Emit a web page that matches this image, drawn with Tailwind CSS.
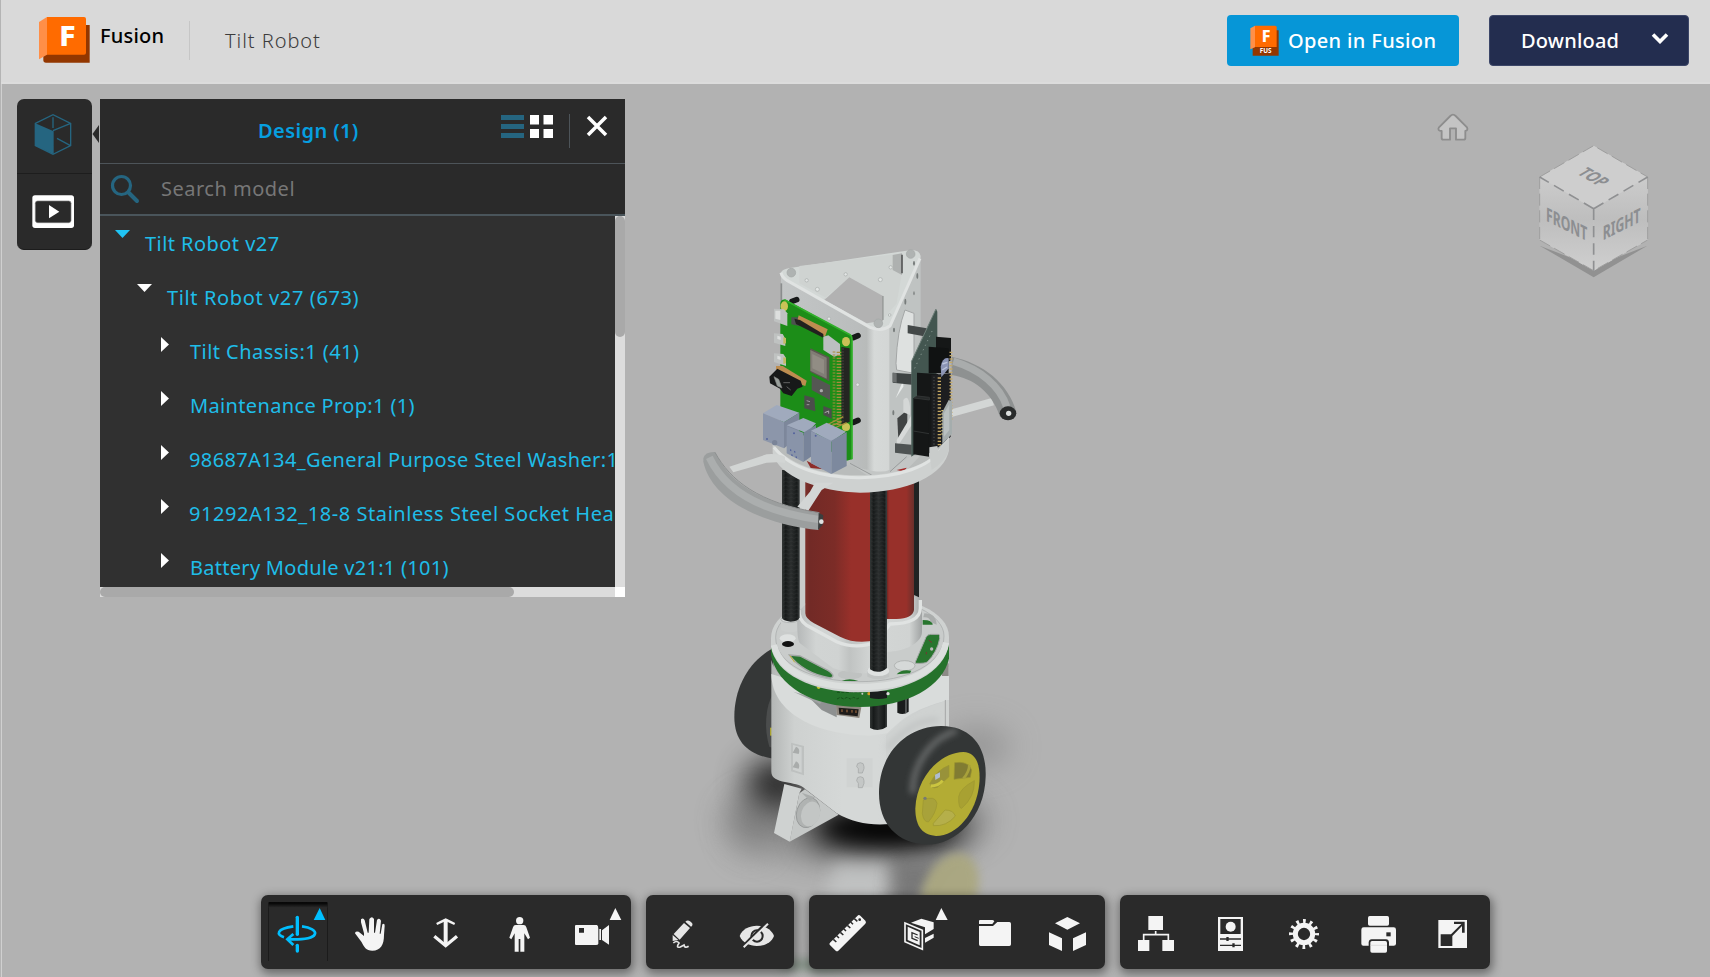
<!DOCTYPE html>
<html lang="en">
<head>
<meta charset="utf-8">
<title>Fusion - Tilt Robot</title>
<script src="https://cdn.jsdelivr.net/npm/@tailwindcss/browser@4"></script>
</head>
<body class="h-screen overflow-hidden bg-[#b2b2b2] font-['Noto_Sans','Open_Sans',sans-serif] text-[20px]">
<div class="flex h-screen flex-col border-l border-[#b4b4b4]">
  <header class="flex h-[84px] shrink-0 items-start border-b-2 border-[#dcdcdc] bg-[#d9d9d9] pl-[38px] pr-[21px]">
    <svg class="mt-[17px] h-[46px] w-[51px] overflow-visible" viewBox="117 51 153 138">
      <path d="M140 75H269V188H138Q130 188 130 180V165Z" fill="#933700"/>
      <path d="M117 66L141 51V164L117 178Z" fill="#ff8f48"/>
      <path d="M141 51H252Q258 51 258 57V158Q258 164 252 164H141Z" fill="#ff6b00"/>
      <text x="202" y="138" text-anchor="middle" font-family="Noto Sans" font-weight="800" font-size="86" textLength="50" lengthAdjust="spacingAndGlyphs" fill="#fff">F</text>
    </svg>
    <div class="ml-[10px] mt-[18px] w-[64px] whitespace-nowrap font-medium leading-9 tracking-[0.2px] text-black">Fusion</div>
    <div class="ml-[25px] mt-[21px] h-[39px] w-px bg-[#c6c6c6]"></div>
    <h1 class="ml-[35px] mt-[23px] font-light leading-9 tracking-[0.95px] text-[#3c3c3c]">Tilt Robot</h1>
    <div class="ml-auto mt-[15px] flex gap-[30px]">
      <button class="flex h-[51px] w-[232px] items-center rounded-[4px] bg-[#0696d7] pl-[23px] font-medium text-white">
        <svg class="h-[31px] w-[30px]" viewBox="152 76 90 93">
          <path d="M168 92H238V168H160V145Z" fill="#933700"/>
          <path d="M153 86L167 78V143L153 149Z" fill="#ff8f48"/>
          <path d="M167 78H227Q232 78 232 83V142H167Z" fill="#ff6b00"/>
          <text x="200" y="127" text-anchor="middle" font-family="Noto Sans" font-weight="800" font-size="48" fill="#fff">F</text>
          <text x="199" y="161" text-anchor="middle" font-family="Noto Sans" font-weight="700" font-size="19" textLength="35" fill="#fff">FUS</text>
        </svg>
        <span class="ml-[8px] whitespace-nowrap tracking-[0.35px]">Open in Fusion</span>
      </button>
      <button class="flex h-[51px] w-[200px] items-center rounded-[4px] border border-[#3c4668] bg-[#232d4f] pl-[31px] font-medium text-white">
        <span class="w-[97px] whitespace-nowrap tracking-[0.2px]">Download</span>
        <svg class="-mt-[6px] ml-[33px] h-[12px] w-[18px]" viewBox="0 0 18 12"><path d="M2 2.500L9 9.500L16 2.500" fill="none" stroke="#fff" stroke-width="3.600"/></svg>
      </button>
    </div>
  </header>

  <main class="relative isolate flex flex-1 flex-col justify-between border-l border-[#d0d0d0]">
    <svg class="absolute -left-px top-0 -z-10 h-[893px] w-[1709px]" viewBox="1 84 1709 893">
      <defs>
        <filter id="b8" x="-100%" y="-150%" width="300%" height="400%"><feGaussianBlur stdDeviation="48"/></filter>
        <filter id="b6" x="-100%" y="-100%" width="300%" height="300%"><feGaussianBlur stdDeviation="26"/></filter>
        <filter id="b4" x="-50%" y="-50%" width="200%" height="200%"><feGaussianBlur stdDeviation="14"/></filter>
        <filter id="b2" x="-50%" y="-50%" width="200%" height="200%"><feGaussianBlur stdDeviation="9"/></filter>
        <linearGradient id="red"><stop offset="0" stop-color="#7d302a"/><stop offset=".04" stop-color="#722a26"/><stop offset=".27" stop-color="#7c2c27"/><stop offset=".42" stop-color="#98302a"/><stop offset=".93" stop-color="#98302a"/><stop offset="1" stop-color="#69302c"/></linearGradient>
        <linearGradient id="rod"><stop offset="0" stop-color="#343837"/><stop offset=".2" stop-color="#171a1a"/><stop offset=".5" stop-color="#2b2e2e"/><stop offset=".85" stop-color="#171a1a"/><stop offset="1" stop-color="#3c4040"/></linearGradient>
        <linearGradient id="body"><stop offset="0" stop-color="#b3b6b5"/><stop offset=".13" stop-color="#ced1d0"/><stop offset=".4" stop-color="#d5d8d7"/><stop offset=".6" stop-color="#d5d8d7"/><stop offset="1" stop-color="#c7caca"/></linearGradient>
        <linearGradient id="cup"><stop offset="0" stop-color="#b5b8b8"/><stop offset=".15" stop-color="#d1d4d3"/><stop offset=".33" stop-color="#d0d3d2"/><stop offset=".42" stop-color="#c0c3c2"/><stop offset=".6" stop-color="#d3d6d5"/><stop offset=".9" stop-color="#d0d3d2"/><stop offset="1" stop-color="#a0a3a3"/></linearGradient>
        <linearGradient id="face"><stop offset="0" stop-color="#c3c6c6"/><stop offset=".7" stop-color="#babdbd"/><stop offset=".79" stop-color="#b8bbba"/><stop offset=".86" stop-color="#d6d9d8"/><stop offset="1" stop-color="#d3d6d5"/></linearGradient>
        <linearGradient id="cubeShade" x1="0" y1="0" x2="0" y2="1"><stop offset="0" stop-color="#cccccc"/><stop offset=".45" stop-color="#bebebe"/><stop offset="1" stop-color="#cfcfcf"/></linearGradient>
        <pattern id="weave" width="16" height="12" patternUnits="userSpaceOnUse"><path d="M0 3L8 7L16 3" fill="none" stroke="#4a5050" stroke-width="1.500" opacity=".35"/></pattern>
        <pattern id="pins" width="60" height="9" patternUnits="userSpaceOnUse"><path d="M0 3H16M20 4H34" stroke="#a98c3c" stroke-width="3.500"/></pattern>
        <clipPath id="tireClip"><path d="M567 880C567 760 650 678 755 678C850 680 890 745 887 830C884 950 800 1034 710 1034C620 1030 567 970 567 880Z"/></clipPath>
      </defs>

      <!-- ground shadow and reflection -->
      <g transform="translate(690 500) scale(.33333)">
        <ellipse cx="500" cy="960" rx="400" ry="130" fill="#555" opacity=".4" filter="url(#b8)"/>
        <ellipse cx="260" cy="850" rx="95" ry="75" fill="#000" opacity=".8" filter="url(#b8)"/>
        <ellipse cx="590" cy="985" rx="240" ry="66" fill="#000" filter="url(#b8)"/>
        <ellipse cx="590" cy="985" rx="180" ry="32" fill="#050505" opacity=".75" filter="url(#b6)"/>
        <ellipse cx="860" cy="740" rx="100" ry="60" fill="#777" opacity=".5" filter="url(#b8)"/>
        <path d="M430 1090H600L560 1330H380Z" fill="#c4c6c6" opacity=".8" filter="url(#b6)"/>
        <path d="M610 1090H770L650 1300H590Z" fill="#5b5c5c" opacity=".65" filter="url(#b6)"/>
        <ellipse cx="780" cy="1175" rx="80" ry="120" transform="rotate(22 780 1175)" fill="#aaa780" opacity=".95" filter="url(#b4)"/>
        <ellipse cx="180" cy="980" rx="60" ry="90" fill="#666" opacity=".35" filter="url(#b8)"/>
        <ellipse cx="380" cy="1395" rx="120" ry="18" fill="#5d7a62" opacity=".5" filter="url(#b4)"/>
      </g>

      <!-- lower chassis -->
      <g transform="translate(690 500) scale(.33333)">
        <path d="M250 445C180 480 133 560 133 650C133 730 180 765 250 776Z" fill="#353737"/>
        <path d="M250 580C225 620 222 690 238 740L250 745Z" fill="#4b4d4d"/><path d="M240 683h7v24h-7z" fill="#a8a22f"/>
        <path d="M244 480C280 640 740 640 777 480V690L770 800L600 972C540 977 490 968 440 940L345 866C320 840 244 855 244 815Z" fill="url(#body)"/>
        <path d="M244 522C246 640 380 705 540 707L592 700C650 640 700 620 777 600V500L500 600Z" fill="#d9dcdb"/>
        <path d="M588 706V830L777 690V600C700 620 650 650 588 706Z" fill="#cfd2d1"/>
        <path d="M592 745C640 690 690 655 745 660" fill="none" stroke="#b9bcbc" stroke-width="10" filter="url(#b2)"/>
        <path d="M766 600V685" stroke="#a5a8a8" stroke-width="3"/>
        <path d="M303 728L342 738V826L303 814Z" fill="#bec1c0"/><path d="M309 735L335 742V818L309 809Z" fill="#ced1d0"/>
        <path d="M318 740q14 6 8 22l-18-4zM318 784q14 6 8 22l-18-4z" fill="#a9acab"/>
        <path d="M470 775H548V862H470Z" fill="#d0d3d2"/>
        <g fill="#c4c7c6" stroke="#a0a3a3" stroke-width="2"><path d="M500 800a11 12 0 0 1 22 0v6l-5 13h-12v-13zM500 842a11 12 0 0 1 22 0v8l-5 13h-12v-13z"/></g>
        <path d="M340 575L440 595V652L395 630Z" fill="#8e9191"/><path d="M310 575L390 612L400 600L430 610" fill="#9fa2a2"/>
        <path d="M438 612L514 622L508 654L440 645Z" fill="#8d867d"/><path d="M446 623L506 628L503 649L448 643Z" fill="#1f1c1a"/><path d="M456 628v8M471 629v8M486 630v8M498 631v8" stroke="#b07344" stroke-width="3"/>
        <path d="M622 590L656 580V635Q640 648 622 638Z" fill="#1a1c1c"/><path d="M648 590V640" stroke="#8a8d8d" stroke-width="3"/>
        <path d="M756 490h20v38h-20z" fill="#8c8a86"/>
        <path d="M540 560H591V680Q566 698 540 684Z" fill="url(#rod)"/>
        <!-- foot -->
        <path d="M299 1025L328 880L345 868L446 944Z" fill="#c5c8c7"/>
        <path d="M283 852L335 866L328 880L299 1025L252 999Z" fill="#cfd2d1"/>
        <ellipse cx="354" cy="938" rx="34" ry="46" transform="rotate(18 354 938)" fill="#b0b3b2" stroke="#8c8f8f" stroke-width="2"/>
        <ellipse cx="362" cy="942" rx="28" ry="38" transform="rotate(18 362 942)" fill="#c3c6c5"/>
        <path d="M335 878l40 14-16 10z" fill="#aaadac"/>
        <!-- green ring board -->
        <path d="M243 415V465C262 560 370 621 510 621C650 621 760 560 777 475V410Z" fill="#25722b"/>
        <path d="M441 577H514M441 597l10-5 10 5 10-5 10 5 10-5 10 5 10-5" stroke="#17511b" stroke-width="3" stroke-dasharray="9 4" fill="none"/>
        <circle cx="386" cy="562" r="5" fill="#c6c426"/><circle cx="537" cy="581" r="5" fill="#d39b27"/><circle cx="517" cy="581" r="3" fill="#ccc"/>
        <path d="M540 573H591V594Q566 600 540 594Z" fill="#1a1d1d"/><circle cx="594" cy="581" r="5" fill="#ddd"/>
        <!-- white ring -->
        <path d="M243 415C243 340 350 284 510 284C660 284 777 335 777 410V432C765 515 655 577 510 577C365 577 255 520 243 440Z" fill="#cfd2d1"/>
        <path d="M257 412C257 345 360 290 510 290C655 290 762 345 762 408C762 490 655 545 510 545C360 545 257 490 257 412Z" fill="#c9cccb" stroke="#a5a8a7" stroke-width="2"/>
        <path d="M252 435C270 515 370 561 510 561C650 561 752 510 768 428" fill="none" stroke="#dcdfde" stroke-width="19"/>
        <path d="M298 465L330 468L415 512Q440 530 420 534C370 525 325 500 298 465Z" fill="#28752e" stroke="#a5a8a7" stroke-width="4"/>
        <path d="M300 467l14 20" stroke="#c4b638" stroke-width="3"/>
        <path d="M676 486L708 412Q712 403 722 403H745Q750 403 749 416Q742 455 712 486Q705 491 676 490Z" fill="#28752e" stroke="#a5a8a7" stroke-width="3"/>
        <circle cx="725" cy="447" r="5" fill="#b9b9b9"/><path d="M716 420l10 8M709 456v7" stroke="#733" stroke-width="3"/>
        <path d="M698 360Q730 360 728 374L698 374Z" fill="#28752e"/><path d="M703 340Q738 340 740 374L722 366Q720 350 700 352Z" fill="#aaadac"/>
        <ellipse cx="293" cy="415" rx="24" ry="12" fill="#dee1e0"/><ellipse cx="294" cy="432" rx="18" ry="9" fill="#111"/>
        <ellipse cx="480" cy="524" rx="36" ry="14" fill="#bfc2c1"/><path d="M455 543Q478 532 505 543Z" fill="#28752e"/>
        <ellipse cx="644" cy="497" rx="31" ry="15" fill="#d6d9d8" stroke="#a3a6a5" stroke-width="2"/><path d="M620 523Q635 506 664 512L660 520Z" fill="#28752e"/>
        <path d="M273 355H325V392Q298 402 273 390Z" fill="#cccfce"/><ellipse cx="299" cy="358" rx="26" ry="10" fill="#d9dcdb" stroke="#a5a8a7" stroke-width="2"/>
        <!-- battery cup -->
        <path d="M322 345Q325 325 347 315H672V290Q690 286 696 315V395C696 430 640 455 592 455V500C560 525 490 525 430 505L330 430Q320 420 322 345Z" fill="url(#cup)"/>
        <path d="M327 330Q325 358 350 376L440 425Q500 450 560 425L600 372Q690 372 691 325V300" fill="none" stroke="#e0e3e2" stroke-width="10"/>
      </g>

      <!-- columns and batteries -->
      <g transform="translate(690 500) scale(.33333)">
        <path d="M672 -80H687V292L672 285Z" fill="#202323"/>
        <path d="M346 -60H672V330Q668 355 620 357H590V400C560 428 500 435 450 410L372 370Q346 355 346 340Z" fill="url(#red)"/>
        <path d="M592 -60V356" stroke="#6c2522" stroke-width="6" opacity=".7"/>
        <path d="M330 -60H345V315L330 330Z" fill="#c9cccb"/>
        <path d="M276 -90H329V352Q325 365 302 365Q278 362 276 354Z" fill="url(#rod)"/><path d="M279 -90H326V356H279Z" fill="url(#weave)"/>
        <path d="M532 508H598V530Q566 545 532 530Z" fill="#c1c4c3"/><ellipse cx="565" cy="512" rx="33" ry="16" fill="#dfe2e1"/>
        <path d="M540 -50H591V504Q566 525 540 508Z" fill="url(#rod)"/><path d="M543 -50H588V508H543Z" fill="url(#weave)"/>
      </g>

      <!-- front wheel -->
      <g transform="translate(690 500) scale(.33333)">
        <g clip-path="url(#tireClip)">
          <rect x="560" y="670" width="335" height="370" fill="#333636"/>
          <path d="M668 880C665 800 720 715 800 692" fill="none" stroke="#707272" stroke-width="15" filter="url(#b2)"/>
        </g>
        <path d="M676 925C680 830 750 758 820 756C862 758 872 800 868 850C860 940 800 1008 738 1008C690 1005 676 970 676 925Z" fill="#b3ac34"/>
        <g stroke="#9b9530" stroke-width="2">
          <path d="M794 788Q835 782 845 810L841 832L792 838Z" fill="#817c32"/>
          <path d="M777 796V830L742 862Q722 868 720 850Q740 810 777 796Z" fill="#98923a"/>
          <path d="M700 900Q735 885 741 910Q738 940 715 966Q700 965 697 940Z" fill="#a8a23a"/>
          <path d="M730 970L765 930Q790 930 796 948Q770 980 730 977Z" fill="#b5af4a"/>
          <path d="M806 890Q810 865 853 842Q855 890 815 925Q805 925 806 890Z" fill="#a8a132"/>
        </g>
        <path d="M735 824l15-7v15l-14 8z" fill="#aebcd0"/><path d="M722 858Q745 858 758 842" stroke="#cbc540" stroke-width="9" fill="none"/><path d="M820 836Q838 815 838 795" stroke="#a7a13b" stroke-width="8" fill="none"/>
        <circle cx="705" cy="895" r="5" fill="#777a72"/>
      </g>

      <!-- upper frame -->
      <g transform="translate(690 240) scale(.33333)">
        <!-- right handle -->
        <path d="M785 508L905 474L912 496L785 531Z" fill="#d3d6d5"/>
        <path d="M785 350C880 370 955 430 979 515L955 540L930 530C905 455 850 415 785 405Z" fill="#8e9191"/>
        <path d="M790 364C870 388 930 438 950 500" fill="none" stroke="#a9acac" stroke-width="22"/>
        <ellipse cx="954" cy="520" rx="25" ry="21" fill="#292b2b"/><circle cx="956" cy="520" r="8" fill="#dcdfde"/>
        <!-- ring interior -->
        <path d="M252 615L777 590C785 690 640 735 510 735C400 735 285 700 252 615Z" fill="#b9bcbb"/>
        <path d="M480 672L620 648H690L650 690L540 712Z" fill="#c3c6c5"/><path d="M350 662L400 688L362 684Z" fill="#8e2d2a"/><path d="M620 690l30-7-8 12z" fill="#a52a28"/>
        <!-- triangular tube -->
        <path d="M595 262L692 60V290L660 650L595 695Z" fill="#bfc3c2"/>
        <path d="M273 98Q276 87 300 84L664 30Q692 30 692 52L600 255Q575 272 545 262L283 118Q273 110 273 98Z" fill="#d3d8d6"/>
        <path d="M328 78V130L540 246L400 178L480 112L579 168V238L620 190L636 98V40Z" fill="#cfd3d1"/>
        <path d="M403 180L478 112L579 168V242L530 250Z" fill="#b2b2b2"/><path d="M579 168V240" stroke="#888b8a" stroke-width="3"/>
        <path d="M608 45L636 40V105L608 90Z" fill="#aeb1b0"/><path d="M636 44V100" stroke="#555858" stroke-width="5"/>
        <path d="M273 95V600L400 660L545 692Q580 698 598 690V262Q570 275 540 262L290 125Q274 115 273 95Z" fill="url(#face)"/>
        <path d="M273 98Q276 112 292 122L540 262Q575 276 600 258L690 55" fill="none" stroke="#e0e3e2" stroke-width="9"/>
        <path d="M274 130V190" stroke="#8a8d8d" stroke-width="5"/>
        <g fill="#afb3b2" stroke="#a3a7a6" stroke-width="2"><circle cx="304" cy="98" r="13"/><circle cx="662" cy="42" r="13"/><circle cx="565" cy="250" r="13"/></g>
        <g fill="#e3e6e5" stroke="#a8acab" stroke-width="2"><circle cx="350" cy="121" r="5"/><circle cx="382" cy="148" r="6"/><circle cx="467" cy="103" r="5"/><circle cx="571" cy="119" r="6"/><circle cx="602" cy="82" r="5"/><circle cx="599" cy="225" r="4"/><circle cx="417" cy="236" r="5"/><circle cx="503" cy="434" r="5"/></g>
        <g fill="#777c7b"><ellipse cx="672" cy="160" rx="2" ry="6"/><ellipse cx="646" cy="185" rx="3" ry="9"/><ellipse cx="682" cy="108" rx="3" ry="9"/><ellipse cx="672" cy="70" rx="3" ry="7"/><ellipse cx="612" cy="270" rx="3" ry="7"/><ellipse cx="610" cy="518" rx="3" ry="8"/></g>
        <path d="M618 370Q622 270 645 210L672 220V400L620 390Z" fill="#dee1e0" stroke="#a3a6a6" stroke-width="3"/>
        <path d="M617 475L640 420V440Z" fill="#e8ebea"/>
        <path d="M622 535L652 510V560L625 600Z" fill="#404343"/><path d="M620 600L665 525V555L622 620Z" fill="#d7dad9"/><path d="M640 480q15-20 20 20v25l-20-8z" fill="#d4d7d6"/>
        <path d="M653 255L710 265V290L653 280Z" fill="#434848"/>
        <path d="M608 398L665 402V434L608 428Z" fill="#3e4343"/><path d="M608 398l12 2v28l-12-2z" fill="#6c7070"/>
        <path d="M615 610L665 614V644L615 638Z" fill="#4e5353"/>
        <path d="M480 670L545 705M600 695L650 650" stroke="#999c9c" stroke-width="3"/>
        <!-- right board -->
        <path d="M664 365L738 207L742 215V300L735 600L664 650Z" fill="#435650"/>
        <path d="M664 365L738 207" stroke="#6d7e78" stroke-width="3"/>
        <path d="M674 385L730 265" stroke="#91a19a" stroke-width="3" stroke-dasharray="3 12"/>
        <path d="M738 290L783 294V360L738 390Z" fill="#151717"/><path d="M716 320L776 325V400H716Z" fill="#101212"/>
        <path d="M681 398L745 402V620L718 640L681 630Z" fill="#151717"/>
        <path d="M724 405L782 400V590L745 622L724 620Z" fill="#1d1e20"/>
        <path d="M670 474L717 478V650L670 643Z" fill="#151717"/><path d="M672 474l10-6 36 4v8zM670 573l47 8" stroke="#303333" stroke-width="3" fill="#262929"/>
        <path d="M748 412V620" stroke="#c5a861" stroke-width="10" stroke-dasharray="4 6"/><path d="M757 510V590" stroke="#d8c172" stroke-width="6" stroke-dasharray="4 6"/>
        <path d="M783 335V540" stroke="#c3a96a" stroke-width="9" stroke-dasharray="4 6"/>
        <path d="M732 410V615" stroke="#3a3d3d" stroke-width="5" stroke-dasharray="4 6"/>
        <path d="M752 380Q758 350 776 355V385L754 412Z" fill="#8c95b5"/><path d="M757 372l15-5M757 390l14-9" stroke="#bcc5dc" stroke-width="4"/>
        <path d="M757 516L776 480L786 484V582L757 612Z" fill="#a5adad"/><path d="M762 520L778 492V570L762 590Z" fill="#b9c0c0"/>
        <!-- upper ring -->
        <path d="M248 610C290 670 390 708 510 706C640 704 725 670 752 620L777 590V630C765 705 650 758 510 758C390 756 265 710 248 640Z" fill="#ced1d0"/>
        <path d="M252 622C300 685 400 714 510 713C630 711 720 680 752 628" fill="none" stroke="#e0e3e2" stroke-width="9"/>
        <path d="M718 640V622L742 618L745 632L777 598V630Q765 665 725 690Z" fill="#c9cccb"/>
        <!-- left handle -->
        <path d="M118 680L230 643Q265 640 285 650L285 668Q260 665 230 668L130 697Z" fill="#d2d5d4"/>
        <path d="M375 728H430L395 750L355 812L322 800L360 755Z" fill="#d3d6d5"/>
        <path d="M40 655Q45 635 75 636C115 720 200 790 388 818L398 840L385 870C215 852 65 780 40 665Z" fill="#9b9e9e"/>
        <path d="M58 652C103 748 205 813 385 838" fill="none" stroke="#abaeae" stroke-width="22"/>
        <path d="M75 637C120 720 205 790 388 818" fill="none" stroke="#8d9090" stroke-width="3"/>
        <path d="M386 818L400 826L398 855L384 870Z" fill="#3c3e3e"/><circle cx="394" cy="845" r="7" fill="#e0e3e2"/>
        <!-- stand-offs -->
        <g stroke="#171919" stroke-width="17" stroke-linecap="round"><path d="M306 184L320 179M490 293L504 287M490 547L504 541"/></g>
        <!-- single board computer -->
        <path d="M271 190Q272 176 288 179L480 284Q486 288 486 300V658L470 662L271 545Z" fill="#1c8d18"/>
        <path d="M283 179L480 284Q486 288 486 300V658" fill="none" stroke="#31b02a" stroke-width="5"/>
        <g fill="#c9c257"><ellipse cx="283" cy="199" rx="11" ry="15"/><ellipse cx="468" cy="305" rx="12" ry="14"/><ellipse cx="468" cy="561" rx="12" ry="12"/></g>
        <path d="M304 232h24v26l-24-5z" fill="#4d514e"/>
        <path d="M326 226L413 268L405 290L322 242Z" fill="#bd8d50"/><path d="M313 236L330 240L400 282V293L318 252Z" fill="#22211f"/>
        <path d="M400 290L415 286L450 312V345L432 350L400 330Z" fill="#bbbfc0"/>
        <path d="M454 321L479 325V545L454 555Z" fill="#242522"/><path d="M459 325V548" stroke="#55564c" stroke-width="3" stroke-dasharray="4 5"/>
        <path d="M428 330H466V555H428Z" fill="url(#pins)"/><path d="M410 555L460 530M410 563L455 545M420 570L470 548" stroke="#a7903d" stroke-width="4"/>
        <path d="M361 325L418 352V424L361 396Z" fill="#5b5850"/><path d="M361 330L410 353V416L361 392Z" fill="#817d75"/><path d="M367 342L402 359V402L367 385Z" fill="#918d84"/>
        <path d="M365 407L420 435V480L365 450Z" fill="#555753"/><circle cx="394" cy="452" r="5" fill="#aaa"/>
        <path d="M343 466L373 474L376 514L343 505Z" fill="#4b4e4b"/><path d="M350 482l10 3M350 494h8" stroke="#999" stroke-width="3" fill="none"/>
        <path d="M400 498L425 507V536L400 525Z" fill="#4b4e4b"/><path d="M404 518l12-5v8" stroke="#aaa" stroke-width="3" fill="none"/>
        <g fill="#bfc2c1"><path d="M252 206L282 208L292 220V258L252 244Z"/><path d="M252 280L278 282L286 296V318L252 308Z"/><path d="M252 340L280 342L288 354V378L252 366Z"/></g>
        <g fill="#dddfde"><path d="M256 212h15v28l-15-4z"/><path d="M262 287l10 3v10l-10-3zM262 347l10 3v10l-10-3z"/></g><path d="M280 292l8 2v16l-8 2zM280 352l8 2v16l-8 2z" fill="#c3bb63"/>
        <path d="M258 378H278L350 422L346 438L305 424L258 394Z" fill="#bd8d50"/>
        <path d="M238 410L262 386L332 422L338 440L322 446L305 468L280 460L270 446L240 430Z" fill="#171919"/>
        <path d="M252 410l14 8 10 26-14-6zM290 440l12 10M280 428l20 0" fill="#99a09c" stroke="#888" stroke-width="2"/>
        <!-- ports -->
        <path d="M219 520L260 495L328 518L282 547Z" fill="#a0aabd"/><path d="M219 520L282 546V625L219 600Z" fill="#8c96aa"/><path d="M282 546L328 518V590L282 625Z" fill="#7d879b"/>
        <path d="M290 556L340 534L378 550L350 580Z" fill="#a0aabd"/><path d="M290 558L340 578V666L290 640Z" fill="#8994a9"/><path d="M340 578L378 555V640L340 666Z" fill="#78849a"/>
        <path d="M363 572L410 548L468 575L424 605Z" fill="#a0aabd"/><path d="M363 574L424 602V702L363 670Z" fill="#8c97ac"/><path d="M424 602L470 576V678L424 702Z" fill="#7d899e"/>
        <g fill="#54639c"><path d="M300 627l4 2v5l-4-2zM312 632l4 2v5l-4-2zM304 642l4 2v5l-4-2zM317 648l4 2v5l-4-2z"/><circle cx="312" cy="580" r="3"/><circle cx="231" cy="597" r="3"/><circle cx="377" cy="587" r="3"/></g><circle cx="254" cy="608" r="8" fill="#7a8498"/>
      </g>

      <!-- home button and view cube -->
      <g transform="translate(1200 0) scale(.33333)">
        <path d="M759 344Q763 344 767 348L801 382Q805 392 796 393V414Q796 419 791 419H768V385H750V419H730Q725 419 725 414V393Q711 392 717 382L751 348Q755 344 759 344Z" fill="#c4c4c4" stroke="#8d8d8d" stroke-width="5.500" stroke-linejoin="round"/>
        <path d="M1019 737L1181 800L1342 737L1181 832Z" fill="#919191"/>
        <path d="M1181 437L1343 531V720L1181 812L1019 720V531Z" fill="#c6c6c6"/>
        <path d="M1019 531L1181 626V812L1019 720Z" fill="url(#cubeShade)"/><path d="M1343 531L1181 626V812L1343 720Z" fill="url(#cubeShade)"/>
        <path d="M1181 437L1343 531L1181 626L1019 531Z" fill="#cecece"/>
        <path d="M1019 531L1181 437L1343 531M1019 720L1181 812L1343 720M1019 531V720M1343 531V720" fill="none" stroke="#969696" stroke-width="2.500" stroke-dasharray="36 14"/>
        <path d="M1181 626L1019 531M1181 626L1343 531M1181 626V812" fill="none" stroke="#8f9092" stroke-width="5" stroke-dasharray="34 18"/>
        <g font-family="Noto Sans" font-weight="700" fill="#8c8e91" text-anchor="middle">
          <text transform="matrix(1 .5 0 1 1100 693)" font-size="58" textLength="124" lengthAdjust="spacingAndGlyphs">FRONT</text>
          <text transform="matrix(1 -.5 0 1 1265 693)" font-size="58" textLength="114" lengthAdjust="spacingAndGlyphs">RIGHT</text>
          <text transform="matrix(.86 .5 -.86 .5 1164 541)" font-size="56" textLength="82" lengthAdjust="spacingAndGlyphs">TOP</text>
        </g>
      </g>
    </svg>

    <div class="flex items-start pl-[15px] pt-[15px]">
      <nav class="flex h-[151px] w-[75px] flex-col overflow-hidden rounded-[7px] border-b border-[#1c1c1c] bg-[#2a2a2a]">
        <button class="flex h-[75px] items-start border-b border-[#1d1d1d]">
          <svg class="h-[73px] w-[75px]" viewBox="51 297 225 219"><path d="M106 370L159 344L212 370V437L159 463L106 437ZM159 392L212 370M159 352V384M171 415L210 436" fill="none" stroke="#256580" stroke-width="4"/><path d="M106 370L161 394V463L106 437Z" fill="#256580"/></svg>
        </button>
        <button class="h-[75px]">
          <svg class="h-[75px] w-[75px]" viewBox="51 522 225 225"><rect x="97" y="586" width="125" height="98" rx="8" fill="#fff"/><rect x="106" y="603" width="107" height="65" rx="7" fill="#2a2a2a" stroke="#777" stroke-width="2"/><path d="M147 615L178 635L147 655Z" fill="#fff"/></svg>
        </button>
      </nav>
      <svg class="mt-[26px] h-[18px] w-[8px]" viewBox="0 0 8 18"><path d="M0.500 9L7 0V18Z" fill="#2a2a2a"/></svg>

      <section class="flex h-[498px] w-[525px] flex-col bg-[#2a2a2a]">
        <div class="flex h-[65px] shrink-0 border-b border-[#4d5459]">
          <h2 class="w-[400px] pl-[158px] pt-[14px] leading-9 font-semibold tracking-[0.4px] text-[#069fe0]">Design (1)</h2>
          <svg class="mt-[15px] h-[25px] w-[54px]" viewBox="0 0 54 25">
            <path d="M1 1h23v5H1zM1 10h23v5H1zM1 19h23v5H1z" fill="#256580"/>
            <path d="M30 1h9v9.500h-9zM43.500 1h9.500v9.500h-9.500zM30 15h9v9h-9zM43.500 15h9.500v9h-9.500z" fill="#fff"/>
          </svg>
          <div class="ml-[15px] mt-[15px] h-[34px] w-px bg-[#4d5459]"></div>
          <svg class="ml-[16px] mt-[16px] h-[22px] w-[22px]" viewBox="0 0 22 22"><path d="M2 2L20 20M20 2L2 20" stroke="#fff" stroke-width="3.500"/></svg>
        </div>
        <div class="flex h-[52px] shrink-0 items-center border-b-2 border-[#4a555b]">
          <svg class="ml-[10px] h-[30px] w-[30px]" viewBox="0 0 30 30"><circle cx="11.500" cy="11.500" r="9" fill="none" stroke="#256580" stroke-width="3.200"/><path d="M18.500 18.500L27 27" stroke="#256580" stroke-width="4" stroke-linecap="round"/></svg>
          <span class="ml-[21px] tracking-[0.5px] text-[#777]">Search model</span>
        </div>
        <div class="flex h-[371px] min-h-0">
          <ul class="w-[515px] overflow-hidden whitespace-nowrap bg-[#303030] text-[#1fbde8]">
            <li class="flex h-[54px] pl-[15px] pt-[14px]"><svg class="h-[8px] w-[15px]" viewBox="0 0 15 8"><path d="M0 0H15L7.500 8Z" fill="#20c4f4"/></svg><span class="ml-[15px] leading-[27px] tracking-[0.45px]">Tilt Robot v27</span></li>
            <li class="flex h-[54px] pl-[37px] pt-[14px]"><svg class="h-[8px] w-[15px]" viewBox="0 0 15 8"><path d="M0 0H15L7.500 8Z" fill="#fff"/></svg><span class="ml-[15px] leading-[27px] tracking-[0.62px]">Tilt Robot v27 (673)</span></li>
            <li class="flex h-[54px] pl-[61px] pt-[14px]"><svg class="-mt-px h-[15px] w-[8px]" viewBox="0 0 8 15"><path d="M0 0V15L8 7.500Z" fill="#fff"/></svg><span class="ml-[21px] leading-[27px] tracking-[0.45px]">Tilt Chassis:1 (41)</span></li>
            <li class="flex h-[54px] pl-[61px] pt-[14px]"><svg class="-mt-px h-[15px] w-[8px]" viewBox="0 0 8 15"><path d="M0 0V15L8 7.500Z" fill="#fff"/></svg><span class="ml-[21px] leading-[27px] tracking-[0.35px]">Maintenance Prop:1 (1)</span></li>
            <li class="flex h-[54px] pl-[61px] pt-[14px]"><svg class="-mt-px h-[15px] w-[8px] shrink-0" viewBox="0 0 8 15"><path d="M0 0V15L8 7.500Z" fill="#fff"/></svg><span class="ml-[20px] leading-[27px] tracking-[0.38px]">98687A134_General Purpose Steel Washer:1</span></li>
            <li class="flex h-[54px] pl-[61px] pt-[14px]"><svg class="-mt-px h-[15px] w-[8px] shrink-0" viewBox="0 0 8 15"><path d="M0 0V15L8 7.500Z" fill="#fff"/></svg><span class="ml-[20px] leading-[27px] tracking-[0.56px]">91292A132_18-8 Stainless Steel Socket Hea</span></li>
            <li class="flex h-[54px] pl-[61px] pt-[14px]"><svg class="-mt-px h-[15px] w-[8px]" viewBox="0 0 8 15"><path d="M0 0V15L8 7.500Z" fill="#fff"/></svg><span class="ml-[21px] leading-[27px] tracking-[0.28px]">Battery Module v21:1 (101)</span></li>
          </ul>
          <div class="w-[10px] bg-[#dcdcdc]"><div class="h-[121px] rounded-full bg-[#a9a9a9]"></div></div>
        </div>
        <div class="flex h-[10px]"><div class="w-[515px] bg-[#dcdcdc]"><div class="h-[10px] w-[414px] rounded-full bg-[#a9a9a9]"></div></div><div class="w-[10px] bg-white"></div></div>
      </section>
    </div>

    <div class="flex gap-[15px] pb-[8px] pl-[259px] text-[#f4f4f4]">
      <div class="flex rounded-[7px] bg-[#2a2a2a] shadow-[1px_3px_10px_2px_rgba(0,0,0,0.4)]">
        <svg class="size-[74px]" viewBox="33 30 222 222">
          <defs><linearGradient id="inset" x1="0" y1="0" x2="0" y2="1"><stop offset="0" stop-color="#000"/><stop offset="1" stop-color="#2a2a2a"/></linearGradient></defs>
          <path d="M54 228V57Q54 51 60 51H228Q234 51 234 57V228" fill="#1b1b1b"/><rect x="57" y="57" width="174" height="171" fill="#2a2a2a"/><path d="M56 52H232V68H56Z" fill="url(#inset)"/>
          <g fill="none" stroke="#00bfff" stroke-width="8"><path d="M142 97V148" stroke-width="10" stroke-linecap="round"/><path d="M142 181V198" stroke-width="10" stroke-linecap="round"/><path d="M130 124C78 131 78 150 102 157"/><path d="M156 124C210 131 211 162 143 163L115 163"/><path d="M130 147L112 163L130 180"/></g>
          <path d="M209 69L226 105H191Z" fill="#00bfff"/>
        </svg>
        <svg class="size-[74px]" viewBox="255 30 222 222" fill="currentColor">
          <path d="M333 103Q340 97 344 106L353 143H356L358 102Q366 92 372 102V143H375L381 105Q388 97 393 107L389 146H392L397 118Q404 113 404 122L402 150C402 180 392 197 367 197C348 197 342 185 334 170L315 145Q315 137 326 140L342 153V145L333 112Z"/>
        </svg>
        <svg class="size-[74px]" viewBox="477 30 222 222" fill="none" stroke="currentColor">
          <path d="M587 104V180" stroke-width="12"/><path d="M560 117Q575 110 587 104Q599 110 614 117" stroke-width="7"/><path d="M553 154L587 182L621 154" stroke-width="10"/>
        </svg>
        <svg class="size-[74px]" viewBox="699 30 222 222" fill="currentColor">
          <circle cx="809" cy="107" r="11"/><path d="M797 120H821Q827 120 829 127L840 158L834 163L823 145V200H811V162H806V200H794V145L784 163L778 158L789 127Q791 120 797 120Z"/>
        </svg>
        <svg class="size-[74px]" viewBox="921 30 222 222" fill="currentColor">
          <path fill-rule="evenodd" d="M978 120H1041Q1045 122 1045 132V176Q1044 180 1038 180H978Q975 180 975 177V123Q975 120 978 120ZM987 129V143H1002V129Z"/><path d="M1048 132H1053V165H1048ZM1056 136L1077 120V179L1056 165Z"/><path d="M1096 69L1114 105H1079Z"/>
        </svg>
      </div>
      <div class="flex rounded-[7px] bg-[#2a2a2a] shadow-[1px_3px_10px_2px_rgba(0,0,0,0.4)]">
        <svg class="size-[74px]" viewBox="48 30 222 222" fill="#e6e6e6">
          <path d="M162 114L180 129L149 164L131 147ZM166 110Q173 103 180 109Q191 116 186 123L183 125ZM128 150L145 165L128 168Z"/><path d="M130 174Q140 165 147 174Q136 190 151 186L162 180Q164 191 176 184" fill="none" stroke="#e6e6e6" stroke-width="5"/>
        </svg>
        <svg class="size-[74px]" viewBox="270 30 222 222" fill="none">
          <path d="M329 153C344 112 417 112 432 153C417 193 344 193 329 153Z" fill="#e6e6e6"/><circle cx="381" cy="153" r="17" stroke="#2a2a2a" stroke-width="6"/><path d="M338 184L409 113" stroke="#2a2a2a" stroke-width="8"/><path d="M341 187L414 116" stroke="#e6e6e6" stroke-width="6"/>
        </svg>
      </div>
      <div class="flex rounded-[7px] bg-[#2a2a2a] shadow-[1px_3px_10px_2px_rgba(0,0,0,0.4)]">
        <svg class="size-[74px]" viewBox="537 30 222 222">
          <path d="M682 93Q686 88 691 92L706 107Q710 111 706 116L625 197Q621 200 617 197L599 179Q597 176 600 173Z" fill="currentColor"/><path d="M610 163L619 171M620 152L627 159M631 142L640 150M641 131L648 138M652 121L661 129M662 111L669 118M673 101L682 109" stroke="#2a2a2a" stroke-width="4.500"/><circle cx="689" cy="104" r="4" fill="#2a2a2a"/>
        </svg>
        <svg class="size-[74px]" viewBox="759 30 222 222" fill="none">
          <path d="M843 113L874 101L911 112V132L885 148V127Z M885 159L911 146V158L885 173Z" fill="currentColor"/><path d="M825 114L877 136V193L825 170Z" fill="#2a2a2a" stroke="currentColor" stroke-width="5"/><path d="M833 125L869 141V181L833 165Z" fill="currentColor"/><path d="M863 150L846 143V160L863 167" stroke="#2a2a2a" stroke-width="4"/><path d="M854 155L866 160" stroke="#2a2a2a" stroke-width="3"/><path d="M934 69L953 105H917Z" fill="currentColor"/>
        </svg>
        <svg class="size-[74px]" viewBox="981 30 222 222" fill="currentColor">
          <path d="M1047 108Q1047 105 1050 105H1087Q1090 105 1093 109L1087 117H1047ZM1047 123H1089L1102 111H1138Q1143 111 1143 116V178Q1143 183 1138 183H1051Q1047 183 1047 178Z"/>
        </svg>
        <svg class="size-[74px]" viewBox="1203 30 222 222" fill="currentColor">
          <path d="M1312 96L1350 115L1312 134L1275 115ZM1257 142L1296 160V198L1257 180ZM1368 142L1329 160V198L1368 180Z"/>
        </svg>
      </div>
      <div class="flex rounded-[7px] bg-[#2a2a2a] shadow-[1px_3px_10px_2px_rgba(0,0,0,0.4)]">
        <svg class="size-[74px]" viewBox="30 30 222 222" fill="currentColor">
          <path d="M115 93H159V135H115ZM84 165H118V198H84ZM157 165H192V198H157Z"/><path d="M137 138V149M101 165V149H175V165" fill="none" stroke="currentColor" stroke-width="5"/>
        </svg>
        <svg class="size-[74px]" viewBox="252 30 222 222">
          <path d="M324 96H399V198H324Z" fill="currentColor"/><path d="M331 102H392V147H331Z" fill="#2a2a2a"/><circle cx="362" cy="125" r="15" fill="currentColor"/><path d="M330 162H393M330 181H393" stroke="#2a2a2a" stroke-width="4"/><path d="M349 156h7v12h-7zM367 175h7v12h-7z" fill="#2a2a2a"/>
        </svg>
        <svg class="size-[74px]" viewBox="474 30 222 222" fill="none" stroke="currentColor">
          <circle cx="582" cy="147" r="26" stroke-width="15"/><circle cx="582" cy="147" r="38" stroke-width="14" stroke-dasharray="8 11.900" stroke-dashoffset="4"/>
        </svg>
        <svg class="size-[74px]" viewBox="696 30 222 222" fill="currentColor">
          <rect x="774" y="93" width="63" height="29" rx="5"/><path d="M761 127H851Q858 127 858 134V176Q858 182 851 182H837V172Q836 163 828 163H785Q777 163 776 172V182H760Q754 182 754 176V134Q754 127 761 127Z"/><path d="M829 142h13v12h-13z" fill="#2a2a2a"/><rect x="781" y="168" width="50" height="35" rx="5"/><path d="M781 181H831" stroke="#d2d2d2" stroke-width="2"/>
        </svg>
        <svg class="size-[74px]" viewBox="918 30 222 222">
          <path d="M985 105H1071V189H985Z" fill="currentColor"/><path d="M992 148H1023L1054 117H1032V110H1064V143H1056V123L1027 153V183H992Z" fill="#2a2a2a"/>
        </svg>
      </div>
    </div>
  </main>
</div>
</body>
</html>
